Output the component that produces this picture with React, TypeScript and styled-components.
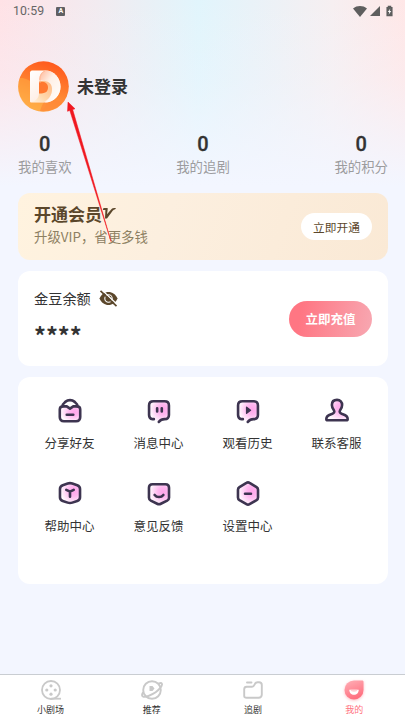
import React from "react";
import styled, { createGlobalStyle } from "styled-components";

const GlobalStyle = createGlobalStyle`
  *, *::before, *::after { box-sizing: border-box; }
  body {
    margin: 0;
    font-family: "Noto Sans CJK SC", "Noto Sans", sans-serif;
    color: #333;
    overflow: hidden;
  }
  svg { display: block; flex: none; overflow: visible; }
`;

const Screen = styled.div`
  position: relative;
  width: 405px;
  height: 720px;
  display: flex;
  flex-direction: column;
  background:
    linear-gradient(180deg, rgba(243, 246, 255, 0) 0px, rgba(243, 246, 255, 0.25) 80px, #f3f6ff 186px),
    linear-gradient(90deg, #ffe2e6 0%, #f2ebf0 24%, #e1f5fc 49%, #e9f2f8 62%, #f6eff1 82%, #ffe7e7 100%);
`;

const StatusBar = styled.header`
  display: flex;
  align-items: center;
  height: 22px;
  padding: 0 12px 0 13px;
  font: 12.3px/22px Roboto, sans-serif;
  letter-spacing: 0.15px;
  color: #666;
`;

const StatusIcons = styled.div`
  display: flex;
  align-items: center;
  margin-left: auto;
  gap: 3px;
`;

const InputBadge = styled.span`
  display: grid;
  place-items: center;
  width: 9px;
  height: 9px;
  margin-left: 12px;
  border-radius: 1px;
  background: #606063;
  color: #fff;
  font: bold 7px/9px Roboto, sans-serif;
`;

const Profile = styled.section`
  display: flex;
  align-items: center;
  gap: 8px;
  height: 51px;
  margin: 39px 18px 0;
`;

const UserName = styled.h1`
  margin: -1px 0 0;
  font-size: 17px;
  line-height: 24px;
  font-weight: 700;
`;

const Stats = styled.section`
  display: flex;
  justify-content: space-between;
  margin: 20px 17px 0 18px;
`;

const Stat = styled.div`
  display: flex;
  flex-direction: column;
  align-items: center;
`;

const StatValue = styled.strong`
  font: 500 20px/24px Roboto, sans-serif;
  -webkit-text-stroke: 0.3px #333;
`;

const StatLabel = styled.span`
  font-size: 13.4px;
  line-height: 20px;
  color: #9c9c9e;
`;

const Cards = styled.main`
  display: flex;
  flex-direction: column;
  gap: 11px;
  margin: 17px 17px 0 18px;
`;

const Card = styled.section<{ $height: number; $vip?: boolean }>`
  display: flex;
  align-items: center;
  justify-content: space-between;
  height: ${(p) => p.$height}px;
  padding: 0 16px;
  border-radius: 12px;
  background: ${(p) => (p.$vip ? "linear-gradient(110deg, #fff3df, #fcefdf 40%, #fae9d5)" : "#fff")};
`;

const VipTitle = styled.h2`
  display: flex;
  align-items: center;
  margin: -5px 0 0;
  font-size: 17px;
  line-height: 23px;
  color: #5b472b;
`;

const VipNote = styled.p`
  margin: 0;
  font-size: 13.4px;
  line-height: 22px;
  color: #8d8062;
`;

const Pill = styled.button<{ $primary?: boolean }>`
  border: 0;
  padding: 0;
  border-radius: 20px;
  font-family: inherit;
  width: ${(p) => (p.$primary ? 83 : 71)}px;
  height: ${(p) => (p.$primary ? 36 : 27)}px;
  font-size: ${(p) => (p.$primary ? 12.5 : 11.7)}px;
  font-weight: ${(p) => (p.$primary ? 700 : 400)};
  color: ${(p) => (p.$primary ? "#fff" : "#5b472b")};
  background: ${(p) => (p.$primary ? "linear-gradient(100deg, #ff7683 15%, #f8a5af 95%)" : "#fff")};
`;

const BalanceLabel = styled.div`
  display: flex;
  align-items: center;
  gap: 8px;
  margin-top: -2px;
  font-size: 14.2px;
  line-height: 20px;
`;

const BalanceValue = styled.div`
  margin-top: 12px;
  height: 27px;
  font: 700 23.5px/31px "Noto Sans CJK SC", sans-serif;
`;

const MenuGrid = styled.section`
  display: grid;
  grid-template-columns: repeat(4, 89px);
  grid-auto-rows: 83px;
  justify-content: center;
  height: 207px;
  padding-top: 21px;
  border-radius: 12px;
  background: #fff;
`;

const MenuItem = styled.div`
  display: flex;
  flex-direction: column;
  align-items: center;
  gap: 9px;
  font-size: 12.5px;
  line-height: 20px;
`;

const TabBar = styled.nav`
  display: grid;
  grid-template-columns: repeat(4, 1fr);
  height: 46px;
  margin-top: auto;
  padding-top: 5px;
  border-top: 1px solid #c9cdd2;
  background: #fff;
`;

const Tab = styled.div<{ $active?: boolean }>`
  display: flex;
  flex-direction: column;
  align-items: center;
  gap: 3px;
  font-size: 9px;
  line-height: 13px;
  color: ${(p) => (p.$active ? "#ff7180" : "#333")};
`;

const Pointer = styled.svg`
  position: absolute;
  left: 0;
  top: 0;
  pointer-events: none;
`;

const Avatar = () => (
  <svg width="51" height="51" viewBox="0 0 51 51">
    <defs>
      <linearGradient id="disc" x1=".65" y1="0" x2=".3" y2="1">
        <stop stopColor="#ff581c" /><stop offset=".5" stopColor="#ff8130" /><stop offset="1" stopColor="#ffab48" />
      </linearGradient>
      <linearGradient id="bow" x1="0" y1="0" x2="1" y2="1">
        <stop stopColor="#ffb595" /><stop offset=".4" stopColor="#fff0e6" /><stop offset="1" stopColor="#fff" />
      </linearGradient>
      <linearGradient id="stem" x1="0" y1="0" x2="1" y2="1">
        <stop stopColor="#fff" /><stop offset="1" stopColor="#ffe3d3" />
      </linearGradient>
      <linearGradient id="fold" x1="1" y1="0" x2="0" y2="1">
        <stop stopColor="#ffb983" /><stop offset=".6" stopColor="#ffd9ad" /><stop offset="1" stopColor="#fff3e4" />
      </linearGradient>
    </defs>
    <circle cx="25.5" cy="25.5" r="25.3" fill="url(#disc)" />
    <path d="M2 17C10 16 24 27 28 38c2 6-3 11-7 12C8 48 0 38 0 26c0-4 1-7 2-9Z" fill="#ffb347" opacity=".45" />
    <path d="M22 50c8 1 17-2 22-8-5-4-14-5-18-1-2 3-3 6-4 9Z" fill="#ff8636" opacity=".65" />
    <path d="M14 9.500h13c9 0 15.500 7.500 15.500 16S36 41.500 26 41.500H13c-1 0-1-1-1-2v-28c0-1 1-2 2-2Z" fill="url(#stem)" />
    <path d="M27 9.500c9 0 15.500 7.500 15.500 16.500 0 8-6.500 15.500-15.500 15.500 5-4 8-10 7-15.500-2-6-7-7-13-7 0-4 2-8 6-9.500Z" fill="url(#bow)" />
    <path d="M21 20c7-1 13 1 13 8 0 6-3 10-8 13H13c5-1 8-4 8-9Z" fill="url(#fold)" />
    <path d="M21 21c5-1 9 1 9 5.500s-3 6-9 6Z" fill="#ff7930" />
    <path d="M22 22v-4c0-4 2-7 5-8" fill="none" stroke="#ffb692" strokeWidth=".8" />
  </svg>
);

const Wifi = () => (
  <svg width="14" height="11" viewBox="0 0 14 11"><path d="M0 2.500C4-.8 10-.8 14 2.500L7 11Z" fill="#5e5e5e" /></svg>
);
const Signal = () => (
  <svg width="10" height="10" viewBox="0 0 10 10"><path d="M10 0v10H0Z" fill="#5e5e5e" /></svg>
);
const BatteryShape = styled.svg`
  margin-left: 3px;
`;
const Battery = () => (
  <BatteryShape width="7" height="12" viewBox="0 0 8 12">
    <path d="M2 0h4v1.500h1.500V12h-7V1.500H2Z" fill="#5e5e5e" /><path d="M5 3 2 7h1.700L3 10.300 6 6H4.200Z" fill="#fff" />
  </BatteryShape>
);

const VipMark = () => (
  <svg width="14" height="13" viewBox="0 0 14 13">
    <path d="M1.500 1h3.300c.8 0 1.100.5.900 1.300L5 7.200 9.600 2C10.300 1.200 11 1 14 1L13 2.500c-1 .1-1.500.4-2.100 1.100L5 11.500H3L3.400 3H.800Z" fill="#5b472b" />
  </svg>
);

const HiddenEye = () => (
  <svg width="19" height="17" viewBox="0 0 19 17">
    <path d="M.500 8.500C2.300 4.200 5.700 2 9.500 2s7.200 2.200 9 6.500c-1.800 4.300-5.200 6.500-9 6.500S2.300 12.800.500 8.500Z" fill="#5b472b" />
    <circle cx="9.500" cy="8.500" r="3.700" fill="none" stroke="#fff" strokeWidth="1.100" />
    <path d="M3.200.2 18.500 14.700" stroke="#fff" strokeWidth="1.300" />
    <path d="m1.500.800 16 15.400" stroke="#5b472b" strokeWidth="1.700" />
  </svg>
);

type IconName = "share" | "message" | "history" | "service" | "help" | "feedback" | "settings";

const bubble = "M8.500 22.800H7c-2.500-.3-3.700-1.800-3.700-4.500V8C3.300 5 5 3.500 8 3.500h12c3 0 4.700 1.500 4.700 4.500v10.300c0 3-1.700 4.500-4.700 4.500-3 0-4.500 1-6.200 3";

const iconShapes: Record<IconName, { body: string; extra: React.ReactNode }> = {
  share: {
    body: "M6 9C3.500 9.300 3 10.500 3 12.500v8C3 23.500 4.500 25 7.500 25h13c3 0 4.500-1.500 4.500-4.500v-8c0-2-.5-3.200-3-3.500l-4.500 0L14 11.500 10.500 9Z",
    extra: <><path d="M6 9C6 5.500 8 5.300 9.500 3.800c2-2 7-2 9 0C20 5.300 22 5.500 22 9" /><path d="M10.500 18h7" /></>,
  },
  message: { body: bubble, extra: <path d="M12 11v3.500M17 11v3.500" /> },
  history: { body: bubble, extra: <path d="m12.500 10 4.200 3.200-4.200 3.200Z" fill="#3d3450" strokeWidth="1.500" /> },
  service: {
    body: "M14 2c-3.600 0-5.500 2.300-5.500 5.500 0 2.500 1 4.300 2.300 6 .8 1.500 0 2.700-1.800 3.500-3 1-6.500 1.300-6.500 5.500 0 1 .5 1.500 1.500 1.500h20c1 0 1.500-.5 1.500-1.500 0-4.200-3.500-4.500-6.500-5.500-1.800-.8-2.600-2-1.800-3.500 1.300-1.700 2.300-3.500 2.300-6C19.500 4.300 17.600 2 14 2Z",
    extra: null,
  },
  help: {
    body: "M11.500 2.700c1.700-.6 3.300-.6 5 0l5.300 1.800c2.100.8 3 1.900 3 4v9c0 2-.9 3.300-3 4l-5.300 1.800c-1.700.6-3.300.6-5 0l-5.300-1.800c-2.100-.7-3-2-3-4v-9c0-2.100.9-3.200 3-4Z",
    extra: <path d="m10 9.500 4 2 4-2M14 11.500V17" />,
  },
  feedback: {
    body: "M7 3.500h14c2.500 0 3.800 1.300 3.800 3.800V18c0 1.500-.7 2.500-2 3.200L16 24.500c-1.300.7-2.700.7-4 0l-6.800-3.300c-1.300-.7-2-1.700-2-3.200V7.300c0-2.500 1.300-3.800 3.800-3.800Z",
    extra: <path d="M9.300 15c2.300 3 7.100 3 9.400 0" />,
  },
  settings: {
    body: "M12.300 2c1.100-.7 2.300-.7 3.400 0l7.500 4.500c1.100.7 1.600 1.500 1.600 2.800v8.400c0 1.300-.5 2.200-1.600 2.900L15.700 25c-1.100.7-2.300.7-3.400 0l-7.500-4.400c-1.100-.7-1.600-1.600-1.600-2.900V9.300c0-1.300.5-2.100 1.600-2.800Z",
    extra: <path d="M10.800 13.700h6.400" />,
  },
};

const MenuIcon = ({ name }: { name: IconName }) => (
  <svg width="26" height="26" viewBox="0 0 28 28">
    <defs>
      <radialGradient id={`blush-${name}`} cx=".7" cy=".4" r=".7">
        <stop stopColor="#ffa5ea" /><stop offset=".35" stopColor="#ffb5ef" /><stop offset="1" stopColor="#fff" />
      </radialGradient>
    </defs>
    <g stroke="#3d3450" strokeWidth="2.800" strokeLinecap="round" strokeLinejoin="round" fill="none">
      <path d={iconShapes[name].body} fill={`url(#blush-${name})`} />
      {iconShapes[name].extra}
    </g>
  </svg>
);

const menu: { icon: IconName; label: string }[] = [
  { icon: "share", label: "分享好友" },
  { icon: "message", label: "消息中心" },
  { icon: "history", label: "观看历史" },
  { icon: "service", label: "联系客服" },
  { icon: "help", label: "帮助中心" },
  { icon: "feedback", label: "意见反馈" },
  { icon: "settings", label: "设置中心" },
];

const ReelIcon = () => (
  <svg width="20" height="20" viewBox="0 0 20 20">
    <circle cx="10" cy="10" r="9" fill="none" stroke="#c9c9c9" strokeWidth="1.800" />
    <path d="M10 18.700h10" stroke="#c9c9c9" strokeWidth="1.800" />
    <g fill="#c9c9c9"><circle cx="10" cy="5.800" r="1.600" /><circle cx="5.800" cy="10" r="1.600" /><circle cx="14.200" cy="10" r="1.600" /><circle cx="10" cy="14.200" r="1.600" /></g>
  </svg>
);
const PlanetIcon = () => (
  <svg width="22" height="20" viewBox="0 0 22 20">
    <g fill="none" stroke="#c9c9c9" strokeWidth="1.900" strokeLinecap="round">
      <circle cx="11" cy="10" r="8.800" />
      <path d="M18 3.500c3-1.200 3.800.2 2.400 2.700C17 12 7 17.500 2.500 16.800.5 16.300.7 14.800 2 12.500" />
    </g>
    <path d="M8.500 6h3l2 2.500-2 2.500h-3Z" fill="#c9c9c9" />
  </svg>
);
const FolderIcon = () => (
  <svg width="20" height="20" viewBox="0 0 20 20">
    <path d="M1.200 16V9.200C1.200 7.500 2 6.700 3.700 6.700H9c1.600 0 2.100-.8 2.600-2.200.6-1.700 1.200-2.300 3-2.300H16c2 0 2.800.8 2.800 2.800v9.500c0 2.200-1 3.200-3.200 3.200H3.700c-1.700 0-2.500-.6-2.500-1.700ZM4 2.500h4.500" fill="none" stroke="#c9c9c9" strokeWidth="1.900" strokeLinecap="round" />
  </svg>
);
const Droplet = styled.path`
  filter: drop-shadow(0 1px 1.5px #ff9aa6aa);
`;
const MineIcon = () => (
  <svg width="20" height="20" viewBox="0 0 20 20">
    <defs><linearGradient id="mine" x1="0" y1="0" x2=".4" y2="1"><stop stopColor="#ffb0b7" /><stop offset="1" stopColor="#ff7080" /></linearGradient></defs>
    <Droplet d="M10 .5h8c1 0 1.500.5 1.500 1.500v8A9.500 9.500 0 1 1 10 .5Z" fill="url(#mine)" />
    <path d="M5.300 9.800h9.400c0 3-2 5-4.700 5s-4.700-2-4.700-5Z" fill="#fff" />
    <path d="M6.500 9.800h7c0 1.200-1.400 2-3.500 2s-3.500-.8-3.500-2Z" fill="#ffd0d4" />
  </svg>
);

export default function App() {
  return (
    <>
      <GlobalStyle />
      <Screen>
        <StatusBar>
          10:59
          <InputBadge>A</InputBadge>
          <StatusIcons><Wifi /><Signal /><Battery /></StatusIcons>
        </StatusBar>
        <Profile>
          <Avatar />
          <UserName>未登录</UserName>
        </Profile>
        <Stats>
          {["我的喜欢", "我的追剧", "我的积分"].map((label) => (
            <Stat key={label}><StatValue>0</StatValue><StatLabel>{label}</StatLabel></Stat>
          ))}
        </Stats>
        <Cards>
          <Card $height={67} $vip>
            <div>
              <VipTitle>开通会员<VipMark /></VipTitle>
              <VipNote>升级VIP，省更多钱</VipNote>
            </div>
            <Pill>立即开通</Pill>
          </Card>
          <Card $height={95}>
            <div>
              <BalanceLabel>金豆余额<HiddenEye /></BalanceLabel>
              <BalanceValue>****</BalanceValue>
            </div>
            <Pill $primary>立即充值</Pill>
          </Card>
          <MenuGrid>
            {menu.map(({ icon, label }) => (
              <MenuItem key={icon}><MenuIcon name={icon} />{label}</MenuItem>
            ))}
          </MenuGrid>
        </Cards>
        <TabBar>
          <Tab><ReelIcon />小剧场</Tab>
          <Tab><PlanetIcon />推荐</Tab>
          <Tab><FolderIcon />追剧</Tab>
          <Tab $active><MineIcon />我的</Tab>
        </TabBar>
        <Pointer width="130" height="250" viewBox="0 0 130 250">
          <path d="M68 102l7 6.800-2.300.8L111 241.500 69.800 110.500l-2.300.8Z" fill="#f01820" stroke="#f01820" strokeWidth=".5" />
        </Pointer>
      </Screen>
    </>
  );
}
